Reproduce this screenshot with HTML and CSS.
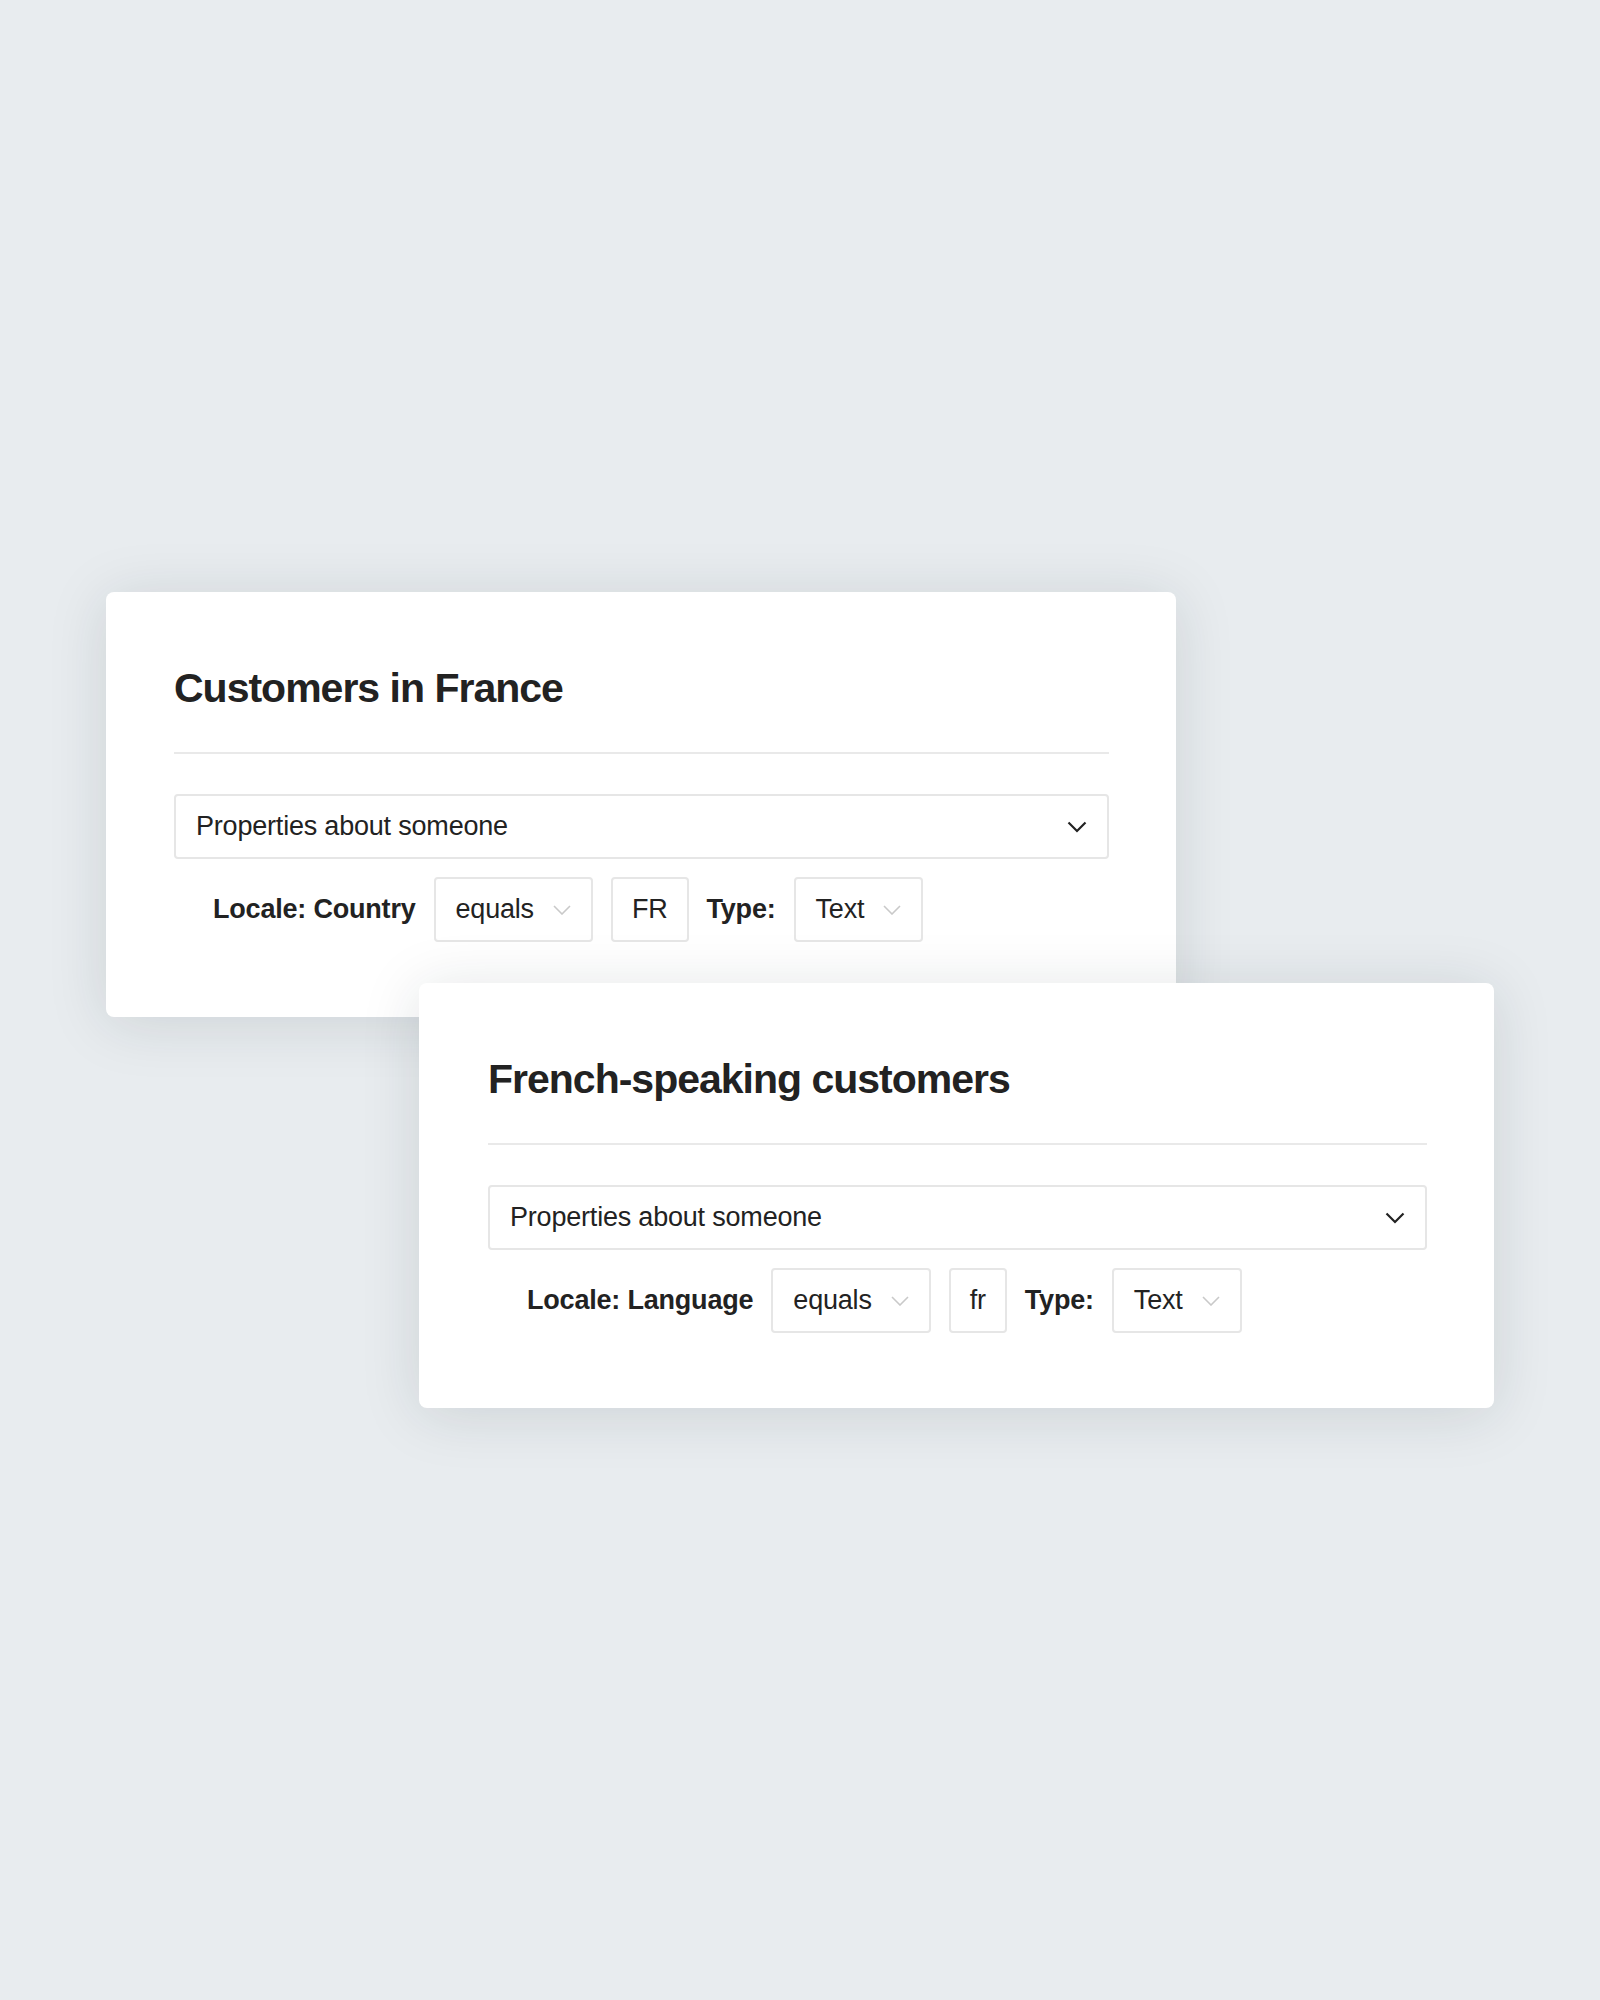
FILE: index.html
```html
<!DOCTYPE html>
<html lang="en">
<head>
    <meta charset="UTF-8">
    <meta name="viewport" content="width=device-width, initial-scale=1.0">
    <title>Segments</title>
    <link rel="stylesheet" href="styles.css">
</head>
<body>

    <div class="stage">
        <div class="card">
            <div class="card-title">Customers in France</div>
            <div class="divider"></div>

            <div class="select">
                <span>Properties about someone</span>
                <svg class="chevron" width="20" height="12" viewBox="0 0 20 12">
                    <polyline points="1.5,1.5 10,10 18.5,1.5" />
                </svg>
            </div>

            <div class="rule">
                <span class="rule-label">Locale: Country</span>
                <div class="field">
                    <span>equals</span>
                    <svg class="chevron-sm" width="18" height="10" viewBox="0 0 18 10">
                        <polyline points="1,1 9,9 17,1" />
                    </svg>
                </div>
                <div class="field field-value">FR</div>
                <span class="rule-label">Type:</span>
                <div class="field">
                    <span>Text</span>
                    <svg class="chevron-sm" width="18" height="10" viewBox="0 0 18 10">
                        <polyline points="1,1 9,9 17,1" />
                    </svg>
                </div>
            </div>
        </div>

        <div class="card card-second">
            <div class="card-title">French-speaking customers</div>
            <div class="divider"></div>

            <div class="select">
                <span>Properties about someone</span>
                <svg class="chevron" width="20" height="12" viewBox="0 0 20 12">
                    <polyline points="1.5,1.5 10,10 18.5,1.5" />
                </svg>
            </div>

            <div class="rule">
                <span class="rule-label">Locale: Language</span>
                <div class="field">
                    <span>equals</span>
                    <svg class="chevron-sm" width="18" height="10" viewBox="0 0 18 10">
                        <polyline points="1,1 9,9 17,1" />
                    </svg>
                </div>
                <div class="field field-value">fr</div>
                <span class="rule-label">Type:</span>
                <div class="field">
                    <span>Text</span>
                    <svg class="chevron-sm" width="18" height="10" viewBox="0 0 18 10">
                        <polyline points="1,1 9,9 17,1" />
                    </svg>
                </div>
            </div>
        </div>
    </div>

</body>
</html>
```

FILE: styles.css
```css
body {
    margin: 0;
    min-height: 2000px;
    background: #e8ecef;
    font-family: "Liberation Sans", Arial, sans-serif;
    color: #222;
}

.stage {
    padding: 592px 0 0 106px;
}

.card {
    position: relative;
    width: 1070px;
    box-sizing: border-box;
    padding: 72px 67px 75px 68px;
    background: white;
    border-radius: 8px;
    box-shadow: 0 6px 60px rgba(25, 35, 50, 0.13);
}

/* second card overlaps the first one */
.card-second {
    margin-left: 313px;
    margin-top: -34px;
    width: 1075px;
    padding-left: 69px;
}

.card-title {
    font-size: 41px;
    line-height: 1.2;
    font-weight: bold;
    letter-spacing: -1px;
    color: #222;
}

.divider {
    height: 2px;
    background: #e9e9e9;
    margin-top: 39px;
}

.select {
    display: flex;
    justify-content: space-between;
    align-items: center;
    height: 65px;
    box-sizing: border-box;
    margin-top: 40px;
    padding: 0 20px 0 20px;
    border: 2px solid #e6e6e6;
    border-radius: 4px;
    font-size: 27px;
    letter-spacing: -0.2px;
}

.chevron polyline {
    fill: none;
    stroke: #222;
    stroke-width: 2.2;
}

.rule {
    display: flex;
    align-items: center;
    gap: 18px;
    margin-top: 18px;
    padding-left: 39px;
}

.rule-label {
    font-size: 27px;
    font-weight: bold;
    letter-spacing: -0.2px;
}

.field {
    display: flex;
    align-items: center;
    gap: 19px;
    height: 65px;
    box-sizing: border-box;
    padding: 0 20px;
    border: 2px solid #e6e6e6;
    border-radius: 4px;
    font-size: 27px;
    letter-spacing: -0.2px;
}

.field-value {
    padding: 0 19px;
}

.chevron-sm polyline {
    fill: none;
    stroke: #c9c9c9;
    stroke-width: 1.6;
}
```
